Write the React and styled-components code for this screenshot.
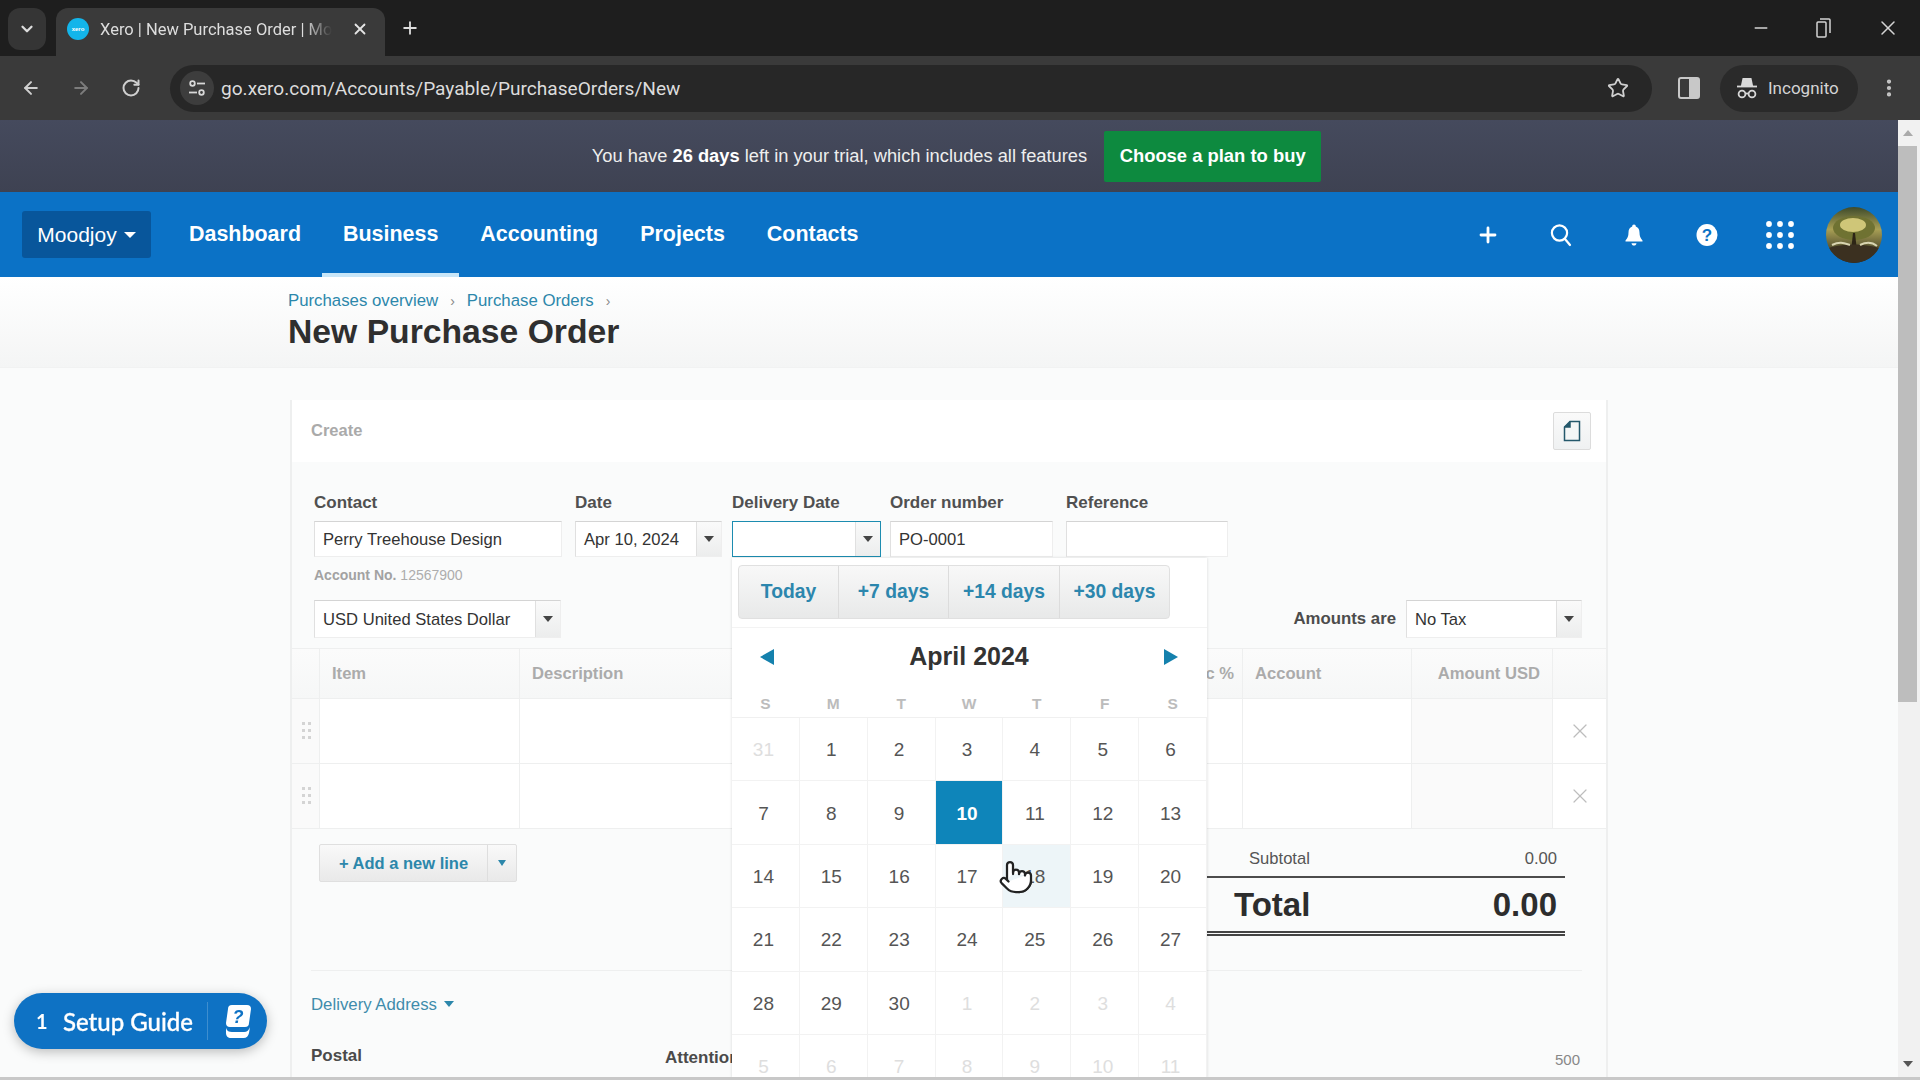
import React from "react";
import styled, { createGlobalStyle } from "styled-components";
import { ArrowLeft, ArrowRight, RotateCw, Star, X, Plus, Minus, ChevronDown, EllipsisVertical, Pointer } from "lucide-react";

const Global = createGlobalStyle`
  html, body { margin: 0; padding: 0; height: 100%; overflow: hidden; background: #fafbfb; }
  #root { height: 100%; }
  * { box-sizing: border-box; }
  body { font-family: "Liberation Sans", Arial, sans-serif; color: #333; }
`;

const Frame = styled.div`display: flex; flex-direction: column; height: 100vh; overflow: hidden;`;

/* browser chrome */
const TabStrip = styled.div`
  height: 56px; flex: none; background: #1e1e1e; display: flex; align-items: flex-end; padding-left: 8px; position: relative;
  color: #ddd; font-family: Roboto, sans-serif;
`;
const TabSearch = styled.div`
  width: 38px; height: 42px; margin-bottom: 6px; border-radius: 12px; background: #353535; display: flex; align-items: center; justify-content: center;
`;
const Tab = styled.div`
  width: 329px; height: 48px; margin-left: 10px; background: #3a3a3a; border-radius: 12px 12px 0 0; display: flex; align-items: center; padding: 0 16px 6px 11px; font-size: 16.5px; color: #ddd;
`;
const Favicon = styled.div`
  width: 22px; height: 22px; border-radius: 50%; background: #13b5ea; color: #fff; font: 700 6px "Liberation Sans", sans-serif; display: flex; align-items: center; justify-content: center; flex: none;
`;
const TabTitle = styled.span`
  margin-left: 11px; width: 232px; overflow: hidden; white-space: nowrap;
  -webkit-mask-image: linear-gradient(90deg, #000 88%, transparent); mask-image: linear-gradient(90deg, #000 88%, transparent);
`;
const TabClose = styled.span`margin-left: auto; display: flex;`;
const NewTab = styled.span`margin: 0 0 18px 15px; display: flex;`;
const WindowButtons = styled.div`margin-left: auto; display: flex; align-items: center; height: 56px; padding-right: 20px; gap: 45px;`;

const Toolbar = styled.div`
  height: 64px; flex: none; background: #3a3a3a; display: flex; align-items: center; padding: 0 20px 0 21px; color: #c4c4c4; font-family: Roboto, sans-serif;
`;
const NavIcons = styled.div`display: flex; gap: 30px; align-items: center;`;
const AddressBar = styled.div`
  margin-left: 29px; width: 1482px; height: 47px; border-radius: 24px; background: #272727; display: flex; align-items: center; padding: 0 23px 0 10px;
`;
const SiteInfo = styled.div`
  width: 34px; height: 34px; border-radius: 50%; background: #3d3d3d; display: flex; align-items: center; justify-content: center; flex: none;
`;
const Url = styled.span`margin-left: 7px; font-size: 19.1px; color: #dcdcdc; white-space: nowrap;`;
const UrlEnd = styled.span`margin-left: auto; display: flex;`;
const PanelIconWrap = styled.span`margin-left: 26px; display: flex;`;
const IncognitoPill = styled.div`
  margin-left: 20px; width: 138px; height: 47px; border-radius: 24px; background: #2a2a2a; display: flex; align-items: center; padding-left: 16px; gap: 10px; font-size: 17px; color: #d4d4d4;
`;
const Kebab = styled.span`margin-left: 20px; display: flex;`;

/* page viewport */
const Viewport = styled.div`flex: 1; min-height: 0; display: flex; position: relative;`;
const Page = styled.div`flex: 1; min-width: 0; display: flex; flex-direction: column; overflow: hidden;`;
const Scrollbar = styled.div`width: 22px; flex: none; background: #f1f1f1; display: flex; flex-direction: column; align-items: center; padding: 0 3px 0 0;`;
const ScrollArrow = styled.div`
  height: 26px; flex: none; display: flex; align-items: center; justify-content: center; width: 100%;
  &::after { content: ""; border-left: 5px solid transparent; border-right: 5px solid transparent;
    ${p => p.$up ? "border-bottom: 6px solid #aaa;" : "border-top: 6px solid #555;"} }
`;
const ScrollThumb = styled.div`width: 100%; height: 556px; background: #bdbdbd; flex: none;`;
const ScrollSpace = styled.div`flex: 1;`;
const BottomBar = styled.div`height: 3px; flex: none; background: #c8c8c8;`;

const Banner = styled.div`
  height: 72px; flex: none; background: linear-gradient(#454a5d, #3e4252); display: flex; align-items: center; justify-content: center; padding-left: 15px; gap: 17px; color: #eee; font-size: 18.3px;
  strong { color: #fff; }
`;
const BuyButton = styled.div`
  height: 51px; width: 217px; background: #0d8a3f; color: #fff; font-weight: 700; font-size: 18.4px; display: flex; align-items: center; justify-content: center; border-radius: 2px;
`;
const TopNav = styled.div`
  height: 85px; flex: none; background: #0b72c6; display: flex; align-items: center; padding: 0 16px 0 22px; color: #fff; position: relative;
`;
const OrgButton = styled.div`
  width: 129px; height: 47px; background: #08569b; border-radius: 3px; display: flex; align-items: center; justify-content: center; gap: 7px; font-size: 21px;
  &::after { content: ""; border-left: 6px solid transparent; border-right: 6px solid transparent; border-top: 6px solid #fff; }
`;
const NavList = styled.div`display: flex; height: 100%; margin-left: 17px;`;
const NavItem = styled.div`
  height: 100%; padding: 0 21px; display: flex; align-items: center; font-size: 21.45px; font-weight: 700; position: relative;
  ${p => p.$active && `&::after { content: ""; position: absolute; left: 0; right: 0; bottom: 0; height: 4px; background: #c8e6f8; }`}
`;
const NavTools = styled.div`margin-left: auto; display: flex; align-items: center;`;
const NavTool = styled.div`width: 73px; display: flex; justify-content: center;`;
const Avatar = styled.div`
  width: 56px; height: 56px; border-radius: 50%; margin-left: 10px; overflow: hidden; flex: none;
`;

const PageHead = styled.div`
  height: 91px; flex: none; background: linear-gradient(#fff, #f4f5f5); padding: 13px 0 0 288px; border-bottom: 1px solid #f1f2f2;
`;
const Crumbs = styled.div`display: flex; align-items: center; font-size: 16.8px; color: #2c87ab; height: 22px; gap: 12px;`;
const CrumbSep = styled.span`color: #888; font-size: 14px;`;
const PageTitle = styled.h1`margin: 0; font-size: 33.7px; line-height: 38px; font-weight: 700; color: #2f2f2f;`;

const Body = styled.div`flex: 1; min-height: 0; background: #fafbfb; padding: 32px 0 0 290px; overflow: hidden;`;
const Card = styled.div`width: 1318px; border-left: 2px solid #eeefef; border-right: 2px solid #eeefef; background: #fafbfb; height: 800px; position: relative;`;
const CardHead = styled.div`
  height: 62px; background: #fff; display: flex; align-items: center; justify-content: space-between; padding: 0 15px 2px 19px;
  color: #aaa; font-size: 16.5px; font-weight: 700;
`;
const DocButton = styled.div`
  width: 38px; height: 38px; margin-top: 2px; background: linear-gradient(#fafafa, #eff1f2); border: 1px solid #dcdcdc; border-radius: 2px; display: flex; align-items: center; justify-content: center;
`;
const FormArea = styled.div`padding: 31px 24px 10px 22px;`;
const FieldRow = styled.div`display: flex;`;
const Field = styled.div`width: ${p => p.$w}px; margin-right: ${p => p.$mr || 0}px; flex: none; position: relative;`;
const Label = styled.div`font-size: 17px; font-weight: 700; color: #505050; line-height: 20px; margin-bottom: 8px; white-space: nowrap;`;
const TextBox = styled.div`
  height: ${p => p.$h || 36}px; display: flex; align-items: stretch; background: #fff; border: 1px solid ${p => p.$focus ? "#1c8cb0" : "#eeeeee"};
  ${p => p.$focus ? "" : "border-top-color: #d4d4d4; border-left-color: #e0e0e0;"}
  font-size: 16.6px; color: #333; width: ${p => p.$w ? p.$w + "px" : "100%"};
`;
const BoxText = styled.span`flex: 1; padding: 2px 0 0 8px; display: flex; align-items: center; white-space: nowrap; overflow: hidden; color: #333;`;
const BoxArrow = styled.span`
  width: ${p => p.$w || 25}px; flex: none; background: linear-gradient(#fafafa, #eceded); border-left: 1px solid #e0e0e0; display: flex; align-items: center; justify-content: center;
  &::after { content: ""; border-left: 5px solid transparent; border-right: 5px solid transparent; border-top: 6px solid #444; }
`;
const AccountNo = styled.div`
  height: 20px; margin-top: 8px; line-height: 20px; font-size: 14px; color: #adadad; b { font-weight: 700; color: #a2a2a2; }
`;
const CurrencyRow = styled.div`margin-top: 15px; display: flex; align-items: center; justify-content: space-between;`;
const AmountsWrap = styled.div`display: flex; align-items: center; gap: 10px;`;
const AmountsLabel = styled.span`font-size: 16.8px; font-weight: 700; color: #4c4c4c;`;

const LineGrid = styled.div`
  display: grid; grid-template-columns: 28px 200px 1fr 100px 169px 141px 53px; border-top: 1px solid #eeefef; border-bottom: 1px solid #eeefef;
  height: ${p => p.$h}px; background: ${p => p.$head ? "linear-gradient(#fbfbfb, #f6f7f7)" : "#fff"};
  margin-top: ${p => p.$head ? 0 : -1}px;
`;
const HeadCell = styled.div`
  border-right: ${p => p.$plain ? "0" : "1px solid #eeefef"}; display: flex; align-items: center; padding: 0 ${p => p.$tight ? 8 : 12}px 0 12px; font-size: 16.6px; font-weight: 700; color: #ababab;
  justify-content: ${p => p.$right ? "flex-end" : "flex-start"}; white-space: nowrap;
`;
const Cell = styled.div`
  border-right: ${p => p.$plain ? "0" : "1px solid #eeefef"}; background: ${p => p.$soft ? "#fafafa" : "#fff"}; display: flex; align-items: center; justify-content: center;
`;
const TotalsZone = styled.div`display: flex; justify-content: space-between; align-items: flex-start; height: 141px; padding: 15px 41px 0 27px;`;
const AddLine = styled.div`
  width: 198px; height: 38px; display: flex; background: linear-gradient(#f9f9f9, #e9e9e9); border: 1px solid #dfdfdf; border-radius: 2px; font-size: 16.5px; font-weight: 700; color: #2c87ab;
`;
const AddText = styled.span`width: 168px; display: flex; align-items: center; justify-content: center; border-right: 1px solid #dedede;`;
const AddArrow = styled.span`
  flex: 1; display: flex; align-items: center; justify-content: center;
  &::after { content: ""; border-left: 4px solid transparent; border-right: 4px solid transparent; border-top: 6px solid #2c87ab; }
`;
const Totals = styled.div`width: 400px; margin-top: 3px;`;
const SubRow = styled.div`height: 31px; border-bottom: 2px solid #4c4c4c; display: flex; justify-content: space-between; padding: 1px 8px 0 84px; font-size: 16.6px; color: #555; line-height: 22px;`;
const TotalRow = styled.div`height: 58px; border-bottom: 5px double #444; display: flex; justify-content: space-between; align-items: center; padding: 0 8px 0 69px; font-size: 33px; font-weight: 700; color: #2d2d2d;`;
const Address = styled.div`margin: 0 24px 0 19px; border-top: 1px solid #eeefef; padding-top: 24px;`;
const AddressLink = styled.div`
  display: flex; align-items: center; gap: 7px; font-size: 16.8px; line-height: 20px; color: #3f8cab;
  &::after { content: ""; border-left: 5px solid transparent; border-right: 5px solid transparent; border-top: 6px solid #2c87ab; margin-bottom: 3px; }
`;
const AddressRow = styled.div`display: flex; align-items: flex-start; margin-top: 31px; height: 30px;`;
const Postal = styled.div`width: 354px; font-size: 17px; font-weight: 700; color: #4a4a4a; line-height: 20px;`;
const Attention = styled.div`margin-top: 2px; font-size: 17px; font-weight: 700; color: #4a4a4a; line-height: 20px;`;
const Counter = styled.div`margin: 4px 2px 0 auto; font-size: 15px; color: #888; line-height: 20px;`;

/* date popup */
const Popup = styled.div`
  position: absolute; top: 65px; left: 0; width: 475px; height: 520px; background: #fff; overflow: hidden; z-index: 3; box-shadow: 0 0 3px rgba(0,0,0,.14); padding-top: 7px;
`;
const QuickRow = styled.div`
  margin-left: 6px; width: 432px; height: 54px; display: flex; background: linear-gradient(#f8f8f8, #e8e9e9); border: 1px solid #e0e0e0; border-radius: 4px;
`;
const QuickButton = styled.div`
  width: ${p => p.$w}px; flex: none; display: flex; align-items: center; justify-content: center; font-size: 19.3px; font-weight: 700; color: #2c86ad; border-right: ${p => p.$last ? 0 : "1px solid #dcdcdc"};
`;
const MonthRow = styled.div`
  margin-top: 8px; height: 58px; border-top: 1px solid #f3f3f3; display: flex; align-items: center; justify-content: space-between; padding: 0 29px 0 28px;
`;
const MonthTitle = styled.div`font-size: 25px; font-weight: 700; color: #333;`;
const Tri = styled.span`
  width: 0; height: 0; border-top: 8px solid transparent; border-bottom: 8px solid transparent;
  ${p => p.$left ? "border-right: 14px solid #1581ad;" : "border-left: 14px solid #1581ad;"}
`;
const WeekRow = styled.div`display: grid; grid-template-columns: repeat(7, 1fr); height: 33px; padding-top: 9px; border-bottom: 1px solid #f0f0f0;`;
const WeekDay = styled.div`text-align: center; font-size: 15.5px; font-weight: 700; color: #bcbcbc; line-height: 20px; padding-right: 1px;`;
const DayGrid = styled.div`display: grid; grid-template-columns: repeat(7, 1fr); grid-auto-rows: 63.4px;`;
const Day = styled.div`
  display: flex; align-items: center; justify-content: center; font-size: 19px; border-right: 1px solid #f2f2f2; border-bottom: 1px solid #f2f2f2; padding: 2px 4px 0 0;
  color: ${p => p.$state === "sel" ? "#fff" : p.$state === "off" ? "#dedede" : "#555"};
  background: ${p => p.$state === "sel" ? "#0e85ba" : p.$state === "hover" ? "#edf5f8" : "#fff"};
  font-weight: ${p => p.$state === "sel" ? 700 : 400};
`;
const HandCursor = styled.div`position: absolute; left: 266px; top: 301px; z-index: 4; display: flex;`;

/* setup guide */
const SetupGuide = styled.div`
  position: fixed; left: 14px; top: 993px; width: 253px; height: 56px; border-radius: 28px; background: #0e72c4; color: #fff; display: flex; align-items: center; padding-left: 22px;
  box-shadow: 0 3px 12px rgba(0,0,0,.25); z-index: 5; font-family: Lato, sans-serif;
`;
const GuideCount = styled.span`font-size: 20px; font-weight: 700; width: 27px;`;
const GuideText = styled.span`font-size: 24px; font-weight: 500; white-space: nowrap; -webkit-text-stroke: .3px #fff;`;
const GuideDivider = styled.span`width: 1px; height: 38px; background: rgba(255,255,255,.2); margin-left: 14px;`;
const GuideIcon = styled.span`margin-left: 15px; display: flex;`;

const Tune = () => (
  <svg width="18" height="18" viewBox="0 0 18 18" fill="none" stroke="#d8d8d8" strokeWidth="1.8">
    <circle cx="4.5" cy="4.5" r="2.3" /><path d="M9 4.5h8" /><circle cx="13.5" cy="13.5" r="2.3" /><path d="M1 13.5h8" />
  </svg>
);
const RestoreIcon = () => (
  <svg width="15" height="24" viewBox="0 0 15 24" fill="none" stroke="#d4d4d4" strokeWidth="1.5">
    <rect x="1" y="6" width="9" height="15" rx="1" /><path d="M4 3h9a1 1 0 0 1 1 1v13" />
  </svg>
);
const PanelIcon = () => (
  <svg width="22" height="22" viewBox="0 0 22 22">
    <rect x="1" y="1" width="20" height="20" rx="2" fill="none" stroke="#c8c8c8" strokeWidth="2" /><rect x="11" y="2" width="9" height="18" fill="#c8c8c8" />
  </svg>
);
const IncognitoIcon = () => (
  <svg width="22" height="24" viewBox="0 0 22 24" fill="none" stroke="#d8d8d8" strokeWidth="1.8">
    <path d="M6 9l1.3-6h7.4L16 9z" fill="#d8d8d8" /><path d="M1 10.5h20" /><circle cx="6" cy="18" r="3.4" /><circle cx="16" cy="18" r="3.4" /><path d="M9.4 17.5h3.2" />
  </svg>
);
const SearchIcon = () => (
  <svg width="22" height="24" viewBox="0 0 22 24" fill="none" stroke="#fff" strokeWidth="2.2" strokeLinecap="round">
    <circle cx="9.5" cy="10" r="7.6" /><path d="M15 16l5 6" />
  </svg>
);
const BellIcon = () => (
  <svg width="20" height="24" viewBox="0 0 20 24" fill="#fff">
    <path d="M10 1.5c1.2 0 1.8.9 1.8 1.9 2.6.8 3.7 3.3 3.7 6.1 0 3.8 1 5.8 3 7.9v1.1H1.500v-1.100c2-2.100 3-4.100 3-7.900 0-2.800 1.100-5.300 3.700-6.100 0-1 .6-1.900 1.800-1.900z" />
    <path d="M7.500 20.300h5c-.2 1.500-1.200 2.300-2.500 2.300s-2.300-.8-2.500-2.300z" />
  </svg>
);
const HelpIcon = () => (
  <svg width="22" height="24" viewBox="0 0 22 24">
    <ellipse cx="11" cy="12" rx="10.500" ry="11" fill="#fff" />
    <text x="11" y="18" textAnchor="middle" fontSize="17" fontWeight="700" fontFamily="Liberation Sans, sans-serif" fill="#0b72c6">?</text>
  </svg>
);
const GridIcon = () => (
  <svg width="30" height="30" viewBox="0 0 30 30" fill="#fff">
    {[4, 15, 26].flatMap(y => [4, 15, 26].map(x => <circle key={`${x}-${y}`} cx={x} cy={y} r="2.900" />))}
  </svg>
);
const AvatarArt = () => (
  <svg width="56" height="56" viewBox="0 0 56 56">
    <defs>
      <linearGradient id="sky" x1="0" y1="0" x2="0" y2="1">
        <stop offset="0" stopColor="#3d4a2a" /><stop offset=".4" stopColor="#a89f55" /><stop offset=".7" stopColor="#5f5a34" /><stop offset="1" stopColor="#2a2218" />
      </linearGradient>
    </defs>
    <rect width="56" height="56" fill="url(#sky)" />
    <ellipse cx="28" cy="21" rx="21" ry="12" fill="#6f7232" />
    <ellipse cx="27" cy="18" rx="13" ry="7" fill="#cfc678" />
    <path d="M27 26l-2 18h6l-2-18z" fill="#2d2516" />
    <path d="M0 42c14-6 40-6 56 0v14H0z" fill="#3b3020" />
    <path d="M6 38c8-4 12-2 18 0M34 38c6-3 12-3 17 1" stroke="#d8d4b0" strokeWidth="2" fill="none" />
  </svg>
);
const DocIcon = () => (
  <svg width="18" height="22" viewBox="0 0 18 22" fill="none" stroke="#24586b" strokeWidth="1.500">
    <path d="M7 1.500h9.500v19h-15V7z" fill="#f4f6f6" /><path d="M7 1.500V7H1.500" fill="#24586b" />
  </svg>
);
const Grip = () => (
  <svg width="12" height="22" viewBox="0 0 12 22" fill="#d4d4d4">
    {[2, 9, 16].flatMap(y => [2, 8].map(x => <rect key={`${x}-${y}`} x={x} y={y} width="3" height="3" />))}
  </svg>
);
const GuideArt = () => (
  <svg width="30" height="36" viewBox="0 0 30 36">
    <path d="M9 2h15a4 4 0 0 1 4 4l-2 14a4 4 0 0 1-4 4H7a4 4 0 0 1-4-4l2-14a4 4 0 0 1 4-4z" fill="#fff" />
    <text x="15" y="20" textAnchor="middle" fontSize="18" fontWeight="700" fontStyle="italic" fontFamily="Liberation Sans, sans-serif" fill="#0e72c4">?</text>
    <path d="M3 25c1 3 3 4 6 4h12c3 0 5-2 6-5l-1 6c-.6 3-2.500 5-5.500 5H8c-3 0-5-2-5-5z" fill="#fff" />
  </svg>
);

const weeks = [
  [["31", "off"], ["1"], ["2"], ["3"], ["4"], ["5"], ["6"]],
  [["7"], ["8"], ["9"], ["10", "sel"], ["11"], ["12"], ["13"]],
  [["14"], ["15"], ["16"], ["17"], ["18", "hover"], ["19"], ["20"]],
  [["21"], ["22"], ["23"], ["24"], ["25"], ["26"], ["27"]],
  [["28"], ["29"], ["30"], ["1", "off"], ["2", "off"], ["3", "off"], ["4", "off"]],
  [["5", "off"], ["6", "off"], ["7", "off"], ["8", "off"], ["9", "off"], ["10", "off"], ["11", "off"]],
];

const LineRow = () => (
  <LineGrid $h={66}>
    <Cell $soft><Grip /></Cell><Cell /><Cell /><Cell /><Cell /><Cell $soft />
    <Cell $plain><X size={24} color="#bdbdbd" strokeWidth={1.200} /></Cell>
  </LineGrid>
);

export default function App() {
  return (
    <Frame>
      <Global />
      <TabStrip>
        <TabSearch><ChevronDown size={18} color="#ddd" strokeWidth={3} /></TabSearch>
        <Tab>
          <Favicon>xero</Favicon>
          <TabTitle>Xero | New Purchase Order | Moodjoy</TabTitle>
          <TabClose><X size={18} color="#e4e4e4" strokeWidth={2.400} /></TabClose>
        </Tab>
        <NewTab><Plus size={20} color="#ddd" strokeWidth={2.200} /></NewTab>
        <WindowButtons>
          <Minus size={20} color="#d4d4d4" strokeWidth={1.600} />
          <RestoreIcon />
          <X size={24} color="#d4d4d4" strokeWidth={1.500} />
        </WindowButtons>
      </TabStrip>
      <Toolbar>
        <NavIcons>
          <ArrowLeft size={20} color="#cfcfcf" strokeWidth={2.400} />
          <ArrowRight size={20} color="#7c7c7c" strokeWidth={2.400} />
          <RotateCw size={20} color="#cfcfcf" strokeWidth={2.400} />
        </NavIcons>
        <AddressBar>
          <SiteInfo><Tune /></SiteInfo>
          <Url>go.xero.com/Accounts/Payable/PurchaseOrders/New</Url>
          <UrlEnd><Star size={22} color="#d0d0d0" strokeWidth={2} /></UrlEnd>
        </AddressBar>
        <PanelIconWrap><PanelIcon /></PanelIconWrap>
        <IncognitoPill><IncognitoIcon />Incognito</IncognitoPill>
        <Kebab><EllipsisVertical size={22} color="#c8c8c8" strokeWidth={2.600} /></Kebab>
      </Toolbar>
      <Viewport>
        <Page>
          <Banner>
            <span>You have <strong>26 days</strong> left in your trial, which includes all features</span>
            <BuyButton>Choose a plan to buy</BuyButton>
          </Banner>
          <TopNav>
            <OrgButton>Moodjoy</OrgButton>
            <NavList>
              <NavItem>Dashboard</NavItem>
              <NavItem $active>Business</NavItem>
              <NavItem>Accounting</NavItem>
              <NavItem>Projects</NavItem>
              <NavItem>Contacts</NavItem>
            </NavList>
            <NavTools>
              <NavTool><Plus size={24} color="#fff" strokeWidth={2.800} /></NavTool>
              <NavTool><SearchIcon /></NavTool>
              <NavTool><BellIcon /></NavTool>
              <NavTool><HelpIcon /></NavTool>
              <NavTool><GridIcon /></NavTool>
              <Avatar><AvatarArt /></Avatar>
            </NavTools>
          </TopNav>
          <PageHead>
            <Crumbs>
              <span>Purchases overview</span><CrumbSep>›</CrumbSep>
              <span>Purchase Orders</span><CrumbSep>›</CrumbSep>
            </Crumbs>
            <PageTitle>New Purchase Order</PageTitle>
          </PageHead>
          <Body>
            <Card>
              <CardHead>
                <span>Create</span>
                <DocButton><DocIcon /></DocButton>
              </CardHead>
              <FormArea>
                <FieldRow>
                  <Field $w={248} $mr={13}>
                    <Label>Contact</Label>
                    <TextBox><BoxText>Perry Treehouse Design</BoxText></TextBox>
                  </Field>
                  <Field $w={147} $mr={10}>
                    <Label>Date</Label>
                    <TextBox><BoxText>Apr 10, 2024</BoxText><BoxArrow /></TextBox>
                  </Field>
                  <Field $w={149} $mr={9}>
                    <Label>Delivery Date</Label>
                    <TextBox $focus><BoxText /><BoxArrow /></TextBox>
                    <Popup>
                      <QuickRow>
                        <QuickButton $w={100}>Today</QuickButton>
                        <QuickButton $w={110}>+7 days</QuickButton>
                        <QuickButton $w={111}>+14 days</QuickButton>
                        <QuickButton $w={109} $last>+30 days</QuickButton>
                      </QuickRow>
                      <MonthRow>
                        <Tri $left />
                        <MonthTitle>April 2024</MonthTitle>
                        <Tri />
                      </MonthRow>
                      <WeekRow>
                        {["S", "M", "T", "W", "T", "F", "S"].map((d, i) => <WeekDay key={i}>{d}</WeekDay>)}
                      </WeekRow>
                      <DayGrid>
                        {weeks.flat().map(([n, s], i) => <Day key={i} $state={s}>{n}</Day>)}
                      </DayGrid>
                      <HandCursor><Pointer size={36} color="#222" fill="#fff" strokeWidth={1.500} /></HandCursor>
                    </Popup>
                  </Field>
                  <Field $w={163} $mr={13}>
                    <Label>Order number</Label>
                    <TextBox><BoxText>PO-0001</BoxText></TextBox>
                  </Field>
                  <Field $w={162}>
                    <Label>Reference</Label>
                    <TextBox />
                  </Field>
                </FieldRow>
                <AccountNo><b>Account No.</b> 12567900</AccountNo>
                <CurrencyRow>
                  <TextBox $w={247} $h={38}><BoxText>USD United States Dollar</BoxText><BoxArrow /></TextBox>
                  <AmountsWrap>
                    <AmountsLabel>Amounts are</AmountsLabel>
                    <TextBox $w={176} $h={38}><BoxText>No Tax</BoxText><BoxArrow /></TextBox>
                  </AmountsWrap>
                </CurrencyRow>
              </FormArea>
              <LineGrid $head $h={51}>
                <HeadCell />
                <HeadCell>Item</HeadCell>
                <HeadCell>Description</HeadCell>
                <HeadCell $right $tight>Disc %</HeadCell>
                <HeadCell>Account</HeadCell>
                <HeadCell $right>Amount USD</HeadCell>
                <HeadCell $plain />
              </LineGrid>
              <LineRow />
              <LineRow />
              <TotalsZone>
                <AddLine><AddText>+ Add a new line</AddText><AddArrow /></AddLine>
                <Totals>
                  <SubRow><span>Subtotal</span><span>0.00</span></SubRow>
                  <TotalRow><span>Total</span><span>0.00</span></TotalRow>
                </Totals>
              </TotalsZone>
              <Address>
                <AddressLink>Delivery Address</AddressLink>
                <AddressRow>
                  <Postal>Postal</Postal>
                  <Attention>Attention</Attention>
                  <Counter>500</Counter>
                </AddressRow>
              </Address>
            </Card>
          </Body>
        </Page>
        <Scrollbar>
          <ScrollArrow $up />
          <ScrollThumb />
          <ScrollSpace />
          <ScrollArrow />
        </Scrollbar>
      </Viewport>
      <BottomBar />
      <SetupGuide>
        <GuideCount>1</GuideCount>
        <GuideText>Setup Guide</GuideText>
        <GuideDivider />
        <GuideIcon><GuideArt /></GuideIcon>
      </SetupGuide>
    </Frame>
  );
}
